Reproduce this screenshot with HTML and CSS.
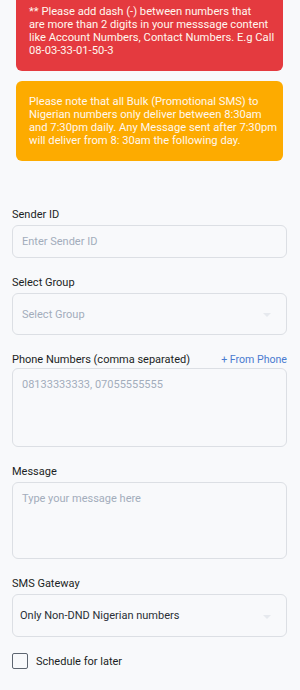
FILE: index.html
```html
<!DOCTYPE html>
<html lang="en">
<head>
  <meta charset="UTF-8">
  <meta name="viewport" content="width=device-width, initial-scale=1.0">
  <title>Send Bulk SMS</title>
  <link rel="stylesheet" href="styles.css">
</head>
<body>
  <div class="page">
    <div class="alert alert-red">
      ** Please add dash (-) between numbers that<br>
      are more than 2 digits in your messsage content<br>
      like Account Numbers, Contact Numbers. E.g Call<br>
      08-03-33-01-50-3
    </div>
    <div class="alert alert-orange">
      Please note that all Bulk (Promotional SMS) to<br>
      Nigerian numbers only deliver between 8:30am<br>
      and 7:30pm daily. Any Message sent after 7:30pm<br>
      will deliver from 8: 30am the following day.
    </div>

    <form class="sms-form">
      <div class="field">
        <label for="sender">Sender ID</label>
        <input type="text" id="sender" class="control input" placeholder="Enter Sender ID">
      </div>

      <div class="field">
        <label for="group">Select Group</label>
        <div class="select-wrap">
          <select id="group" class="control select placeholder">
            <option>Select Group</option>
          </select>
        </div>
      </div>

      <div class="field">
        <div class="label-row">
          <label for="phones">Phone Numbers (comma separated)</label>
          <a href="#" class="from-phone">+ From Phone</a>
        </div>
        <textarea id="phones" class="control textarea phones" placeholder="08133333333, 07055555555"></textarea>
      </div>

      <div class="field">
        <label for="message">Message</label>
        <textarea id="message" class="control textarea message" placeholder="Type your message here"></textarea>
      </div>

      <div class="field">
        <label for="gateway">SMS Gateway</label>
        <div class="select-wrap">
          <select id="gateway" class="control select gateway">
            <option>Only Non-DND Nigerian numbers</option>
          </select>
        </div>
      </div>

      <label class="check">
        <input type="checkbox">
        <span class="box"></span>
        <span>Schedule for later</span>
      </label>
    </form>
  </div>
</body>
</html>
```
FILE: styles.css
```css
body {
  margin: 0;
  background-color: #f8f9fb;
  font-family: Roboto, "Noto Sans", Arial, sans-serif;
  color: #1f2329;
  overflow: hidden;
}
.page {
  padding: 0 13px 0 12px;
}

.alert {
  margin: 0 4px;
  border-radius: 6px;
  color: #fff7ee;
  font-size: 11.2px;
  line-height: 13px;
  white-space: nowrap;
}
.alert-red {
  margin-top: -10px;
  padding: 15px 10px 14px 13px;
  background-color: #e43a3f;
}
.alert-orange {
  margin-top: 10px;
  padding: 14px 10px 14px 13px;
  background-color: #fdab00;
}

.sms-form {
  margin-top: 46px;
  display: flex;
  flex-direction: column;
  gap: 17px;
}
.field label,
.label-row {
  display: block;
  font-size: 11px;
  line-height: 16px;
  margin-bottom: 2px;
  color: #1b1f24;
}
.label-row {
  display: flex;
  justify-content: space-between;
  align-items: center;
  margin-bottom: 0;
}
.label-row label {
  margin-bottom: 0;
}
.from-phone {
  color: #4a7bd0;
  text-decoration: none;
  font-size: 10.6px;
}

.control {
  display: block;
  width: 100%;
  box-sizing: border-box;
  border: 1px solid #dcdfe4;
  border-radius: 6px;
  background-color: #f8f9fb;
  font-family: inherit;
  font-size: 11px;
  color: #2a2f36;
  outline: none;
}
.control::placeholder {
  color: #a3adbb;
}
.input {
  height: 33px;
  padding: 0 9px;
}
.select {
  appearance: none;
  -webkit-appearance: none;
  height: 42px;
  padding: 0 9px;
}
.select.placeholder {
  color: #a3adbb;
}
.select.gateway {
  height: 43px;
  padding: 0 7px;
  color: #2a2f36;
}
.select-wrap {
  position: relative;
}
.select-wrap::after {
  content: "";
  position: absolute;
  right: 16px;
  top: 50%;
  margin-top: -1px;
  border-left: 4px solid transparent;
  border-right: 4px solid transparent;
  border-top: 4px solid #e6e9ee;
}
.textarea {
  resize: none;
  padding: 9px 9px;
  line-height: 14px;
}
.phones {
  height: 79px;
}
.message {
  height: 77px;
}

.check {
  display: flex;
  align-items: center;
  gap: 8px;
  margin-top: -1px;
  font-size: 11px;
  color: #1b1f24;
}
.check input {
  display: none;
}
.check .box {
  width: 16px;
  height: 16px;
  box-sizing: border-box;
  border: 1.5px solid #5d6570;
  border-radius: 2px;
}
```
